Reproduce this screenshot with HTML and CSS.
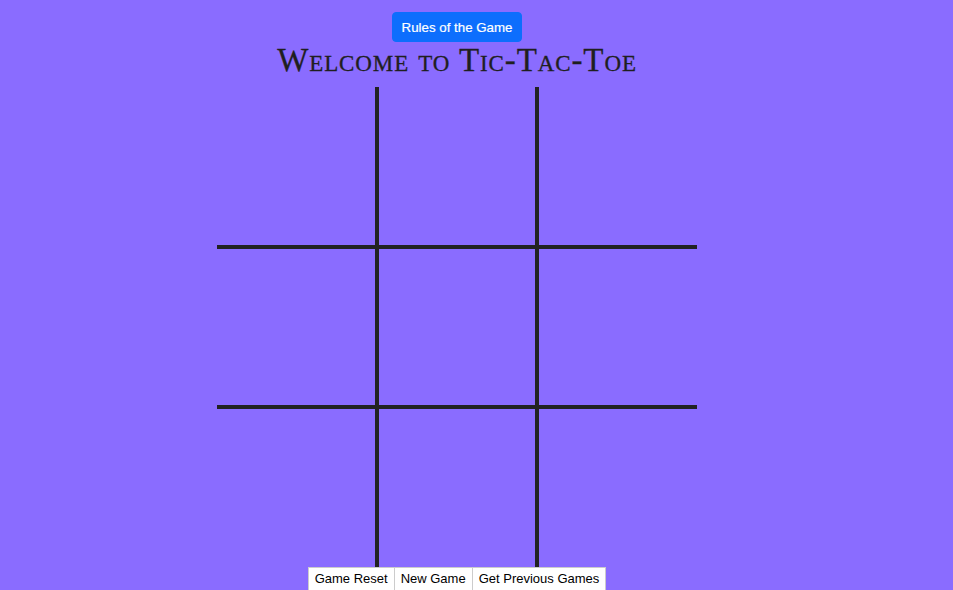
FILE: index.html
```html
<!DOCTYPE html>
<html>
<head>
	<meta charset="utf-8">
	<title>Tic-Tac-Toe</title>
	<link rel="stylesheet" href="styles.css">
</head>
<body>
<div class="page">
	<button class="rules-btn">Rules of the Game</button>
	<h1 class="title">Welcome to Tic-Tac-Toe</h1>

	<div class="board">
		<div class="cell c1 r1"></div>
		<div class="cell c2 r1"></div>
		<div class="cell c3 r1"></div>
		<div class="cell c1 r2"></div>
		<div class="cell c2 r2"></div>
		<div class="cell c3 r2"></div>
		<div class="cell c1 r3"></div>
		<div class="cell c2 r3"></div>
		<div class="cell c3 r3"></div>
	</div>

	<div class="controls">
		<button class="ctrl">Game Reset</button>
		<button class="ctrl">New Game</button>
		<button class="ctrl">Get Previous Games</button>
	</div>
</div>
</body>
</html>
```

FILE: styles.css
```css
body {
	margin: 0;
	background-color: #8a6cff;
	font-family: "Liberation Sans", Arial, sans-serif;
	overflow: hidden;
}

.page {
	width: 480px;
	margin-left: 217px;
	padding-top: 12px;
	display: flex;
	flex-direction: column;
	align-items: center;
}

.rules-btn {
	background-color: #0d6efd;
	color: white;
	border: 1px solid #0d6efd;
	border-radius: 4px;
	font-family: "Liberation Sans", Arial, sans-serif;
	font-size: 13.3px;
	height: 30px;
	padding: 0 9px;
	cursor: pointer;
	-webkit-text-stroke: 0.2px white;
}

.title {
	margin: 0;
	height: 36px;
	padding-bottom: 9px;
	line-height: 36px;
	font-family: "Liberation Serif", "Times New Roman", serif;
	font-variant: small-caps;
	font-weight: normal;
	font-size: 33px;
	letter-spacing: 0.9px;
	color: #1f1f1f;
	white-space: nowrap;
	-webkit-text-stroke: 0.3px #1f1f1f;
}

.board {
	display: grid;
	grid-template-columns: 162px 160px 158px;
	grid-template-rows: 162px 160px 158px;
	width: 480px;
}

.cell {
	box-sizing: border-box;
}

.c1, .c2 {
	border-right: 4px solid #222222;
}

.r1, .r2 {
	border-bottom: 4px solid #222222;
}

.controls {
	display: flex;
}

.ctrl {
	background: white;
	border: 1px solid #cccccc;
	font-family: "Liberation Sans", Arial, sans-serif;
	font-size: 13px;
	color: black;
	padding: 3px 6px 4px;
	margin: 0;
}

.ctrl + .ctrl {
	margin-left: -1px;
}
```
